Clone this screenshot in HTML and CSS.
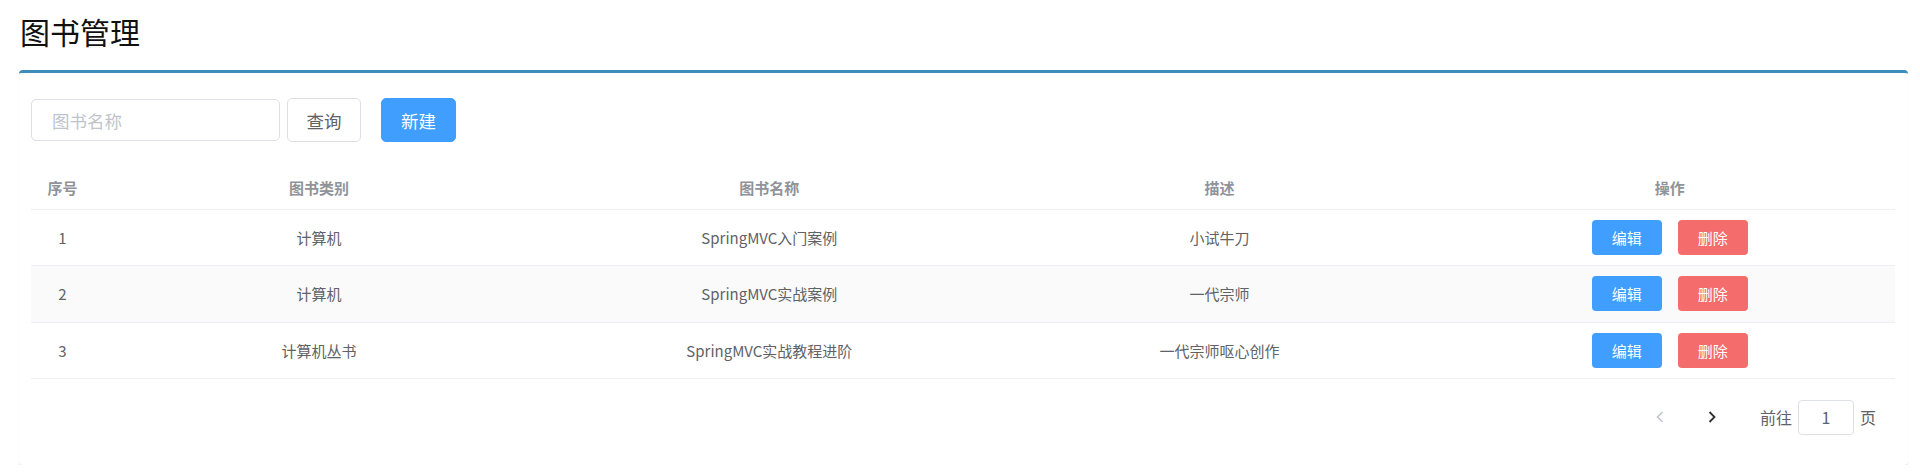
FILE: index.html
```html
<!DOCTYPE html>
<html lang="zh-CN">
<head>
<meta charset="utf-8">
<title>图书管理</title>
<link rel="stylesheet" href="styles.css">
</head>
<body>
<header class="page-header">
  <h1 class="page-title">图书管理</h1>
</header>
<section class="box">
  <div class="toolbar">
    <div class="search-input"><span class="placeholder">图书名称</span></div>
    <button class="btn btn-default">查询</button>
    <button class="btn btn-primary btn-new">新建</button>
  </div>
  <div class="table">
    <div class="row head">
      <div class="cell">序号</div>
      <div class="cell">图书类别</div>
      <div class="cell">图书名称</div>
      <div class="cell">描述</div>
      <div class="cell">操作</div>
    </div>
    <div class="row">
      <div class="cell">1</div>
      <div class="cell">计算机</div>
      <div class="cell">SpringMVC入门案例</div>
      <div class="cell">小试牛刀</div>
      <div class="cell ops"><button class="mini mini-edit">编辑</button><button class="mini mini-del">删除</button></div>
    </div>
    <div class="row striped">
      <div class="cell">2</div>
      <div class="cell">计算机</div>
      <div class="cell">SpringMVC实战案例</div>
      <div class="cell">一代宗师</div>
      <div class="cell ops"><button class="mini mini-edit">编辑</button><button class="mini mini-del">删除</button></div>
    </div>
    <div class="row">
      <div class="cell">3</div>
      <div class="cell">计算机丛书</div>
      <div class="cell">SpringMVC实战教程进阶</div>
      <div class="cell">一代宗师呕心创作</div>
      <div class="cell ops"><button class="mini mini-edit">编辑</button><button class="mini mini-del">删除</button></div>
    </div>
  </div>
  <div class="pagination">
    <span class="page-btn disabled"><svg width="8" height="12" viewBox="0 0 8 12"><path d="M6.5 1 L1.5 6 L6.5 11" fill="none" stroke="currentColor" stroke-width="1.6"/></svg></span>
    <span class="page-btn"><svg width="8" height="12" viewBox="0 0 8 12"><path d="M1.5 1 L6.5 6 L1.5 11" fill="none" stroke="currentColor" stroke-width="1.8"/></svg></span>
    <span class="jump">前往</span>
    <span class="jump-input">1</span>
    <span class="jump">页</span>
  </div>
</section>
</body>
</html>
```
FILE: styles.css
```css
* { box-sizing: border-box; }
body {
  margin: 0;
  background: #fff;
  font-family: "Noto Sans", "Noto Sans CJK SC", sans-serif;
  color: #606266;
}
.page-header { padding: 16px 20px 0; height: 70px; }
.page-title {
  margin: 0;
  font-size: 30px;
  line-height: 30px;
  font-weight: 400;
  color: #111;
  font-family: "Noto Sans CJK SC", sans-serif;
}
.box {
  margin-left: 19px;
  width: 1889px;
  border-top: 3px solid #3c8dbc;
  border-radius: 4px;
  box-shadow: 0 1px 1px rgba(0,0,0,0.12);
  background: #fff;
  padding: 25px 13px 30px 12px;
}
.toolbar { display: flex; align-items: center; height: 44px; }
.search-input {
  width: 249px;
  height: 42px;
  border: 1px solid #dcdfe6;
  border-radius: 5px;
  padding-left: 20px;
  display: flex;
  align-items: center;
}
.placeholder { color: #c0c4cc; font-size: 17.5px; font-family: "Noto Sans CJK SC", sans-serif; }
.btn {
  height: 44px;
  border-radius: 5px;
  font-size: 17.5px;
  font-family: "Noto Sans CJK SC", sans-serif;
  padding: 0;
  cursor: pointer;
}
.btn-default {
  width: 74px;
  margin-left: 7px;
  border: 1px solid #dcdfe6;
  background: #fff;
  color: #606266;
}
.btn-primary {
  width: 75px;
  margin-left: 20px;
  border: 1px solid #409eff;
  background: #409eff;
  color: #fff;
}
.table { margin-top: 23px; font-size: 15px; font-family: "Noto Sans CJK SC", sans-serif; }
.row {
  display: grid;
  grid-template-columns: 63px repeat(4, 1fr);
  height: 56.25px;
  border-bottom: 1px solid #ebeef5;
  align-items: center;
}
.row.head { height: 45px; color: #909399; font-weight: 700; }
.row.striped { background: #fafafa; }
.cell { text-align: center; white-space: nowrap; }
.ops { display: flex; justify-content: center; gap: 16px; }
.mini {
  width: 70px;
  height: 35px;
  border: none;
  border-radius: 4px;
  color: #fff;
  font-size: 15px;
  font-family: "Noto Sans CJK SC", sans-serif;
  padding: 0;
}
.mini-edit { background: #409eff; }
.mini-del { background: #f56c6c; }
.pagination {
  margin-top: 21px;
  height: 35px;
  display: flex;
  justify-content: flex-end;
  align-items: center;
  padding-right: 19px;
  font-size: 16px;
  font-family: "Noto Sans CJK SC", sans-serif;
}
.page-btn {
  width: 37px;
  height: 35px;
  display: flex;
  align-items: center;
  justify-content: center;
  color: #303133;
}
.page-btn + .page-btn { margin-left: 15px; }
.page-btn.disabled { color: #c0c4cc; }
.jump { color: #606266; }
.page-btn + .jump { margin-left: 29px; }
.jump-input {
  width: 56px;
  height: 35px;
  margin: 0 6px;
  border: 1px solid #dcdfe6;
  border-radius: 4px;
  display: flex;
  align-items: center;
  justify-content: center;
  color: #606266;
}
```
